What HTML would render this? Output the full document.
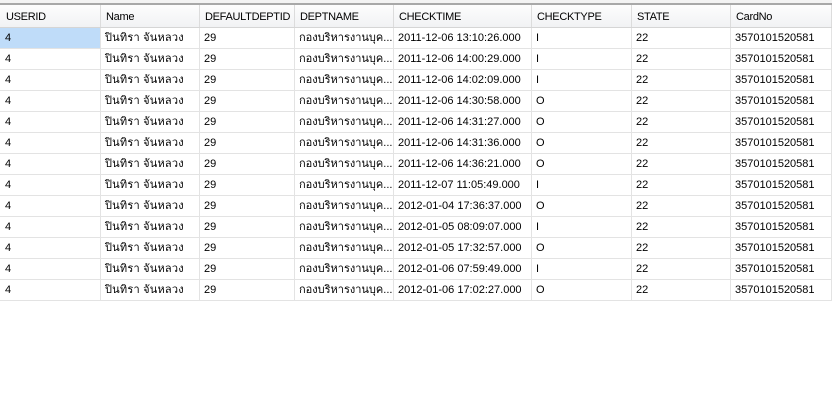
<!DOCTYPE html>
<html><head><meta charset="utf-8"><style>
body{margin:0;width:832px;height:419px;background:#fff;position:relative;overflow:hidden;font-family:"Liberation Sans","Tahoma","Noto Sans CJK SC",sans-serif;font-size:11px;color:#000}
.top{position:absolute;left:0;top:0;width:832px;height:3px;background:#f3f3f3}
.topl{position:absolute;left:0;top:3px;width:832px;height:2px;background:#a8a8a8}
.hdr{position:absolute;left:0;top:5px;width:832px;height:22px;background:linear-gradient(#fdfdfd,#f1f2f4);border-bottom:1px solid #d5d5d5}
.c{position:absolute;height:20px;line-height:21px;white-space:nowrap;overflow:hidden;padding-left:5px;box-sizing:border-box;border-right:1px solid #e3e3e3;border-bottom:1px solid #e3e3e3}
.h{position:absolute;top:5px;height:22px;line-height:24px;padding-left:6px;box-sizing:border-box;border-right:1px solid #dcdcdc;white-space:nowrap;letter-spacing:-0.3px;overflow:hidden}
.th{color:#000;letter-spacing:0.2px}
</style></head><body>
<div class="top"></div><div class="topl"></div><div class="hdr"></div>
<div id="g"></div>
<script>
var cols=[0,100,199,294,393,531,631,730,831];
var names=["USERID","Name","DEFAULTDEPTID","DEPTNAME","CHECKTIME","CHECKTYPE","STATE","CardNo"];
var times=["2011-12-06 13:10:26.000","2011-12-06 14:00:29.000","2011-12-06 14:02:09.000","2011-12-06 14:30:58.000","2011-12-06 14:31:27.000","2011-12-06 14:31:36.000","2011-12-06 14:36:21.000","2011-12-07 11:05:49.000","2012-01-04 17:36:37.000","2012-01-05 08:09:07.000","2012-01-05 17:32:57.000","2012-01-06 07:59:49.000","2012-01-06 17:02:27.000"];
var types="IIIOOOOIOIOIO";
var h="";
for(var i=0;i<8;i++){h+='<div class="h" style="left:'+cols[i]+'px;width:'+(cols[i+1]-cols[i]+1)+'px">'+names[i]+'</div>';}
for(var r=0;r<13;r++){
 var y=28+r*21;
 var v=["4","<span class='th'>ปินทิรา  จันหลวง</span>","29","กองบริหารงานบุค...",times[r],types[r],"22","3570101520581"];
 for(var i=0;i<8;i++){
  var bg=(r==0&&i==0)?"background:#bfdcf9;":"";
  h+='<div class="c" style="'+bg+'left:'+cols[i]+'px;top:'+y+'px;width:'+(cols[i+1]-cols[i]+1)+'px;height:21px">'+v[i]+'</div>';
 }
}
document.getElementById("g").innerHTML=h;
</script>
</body></html>
